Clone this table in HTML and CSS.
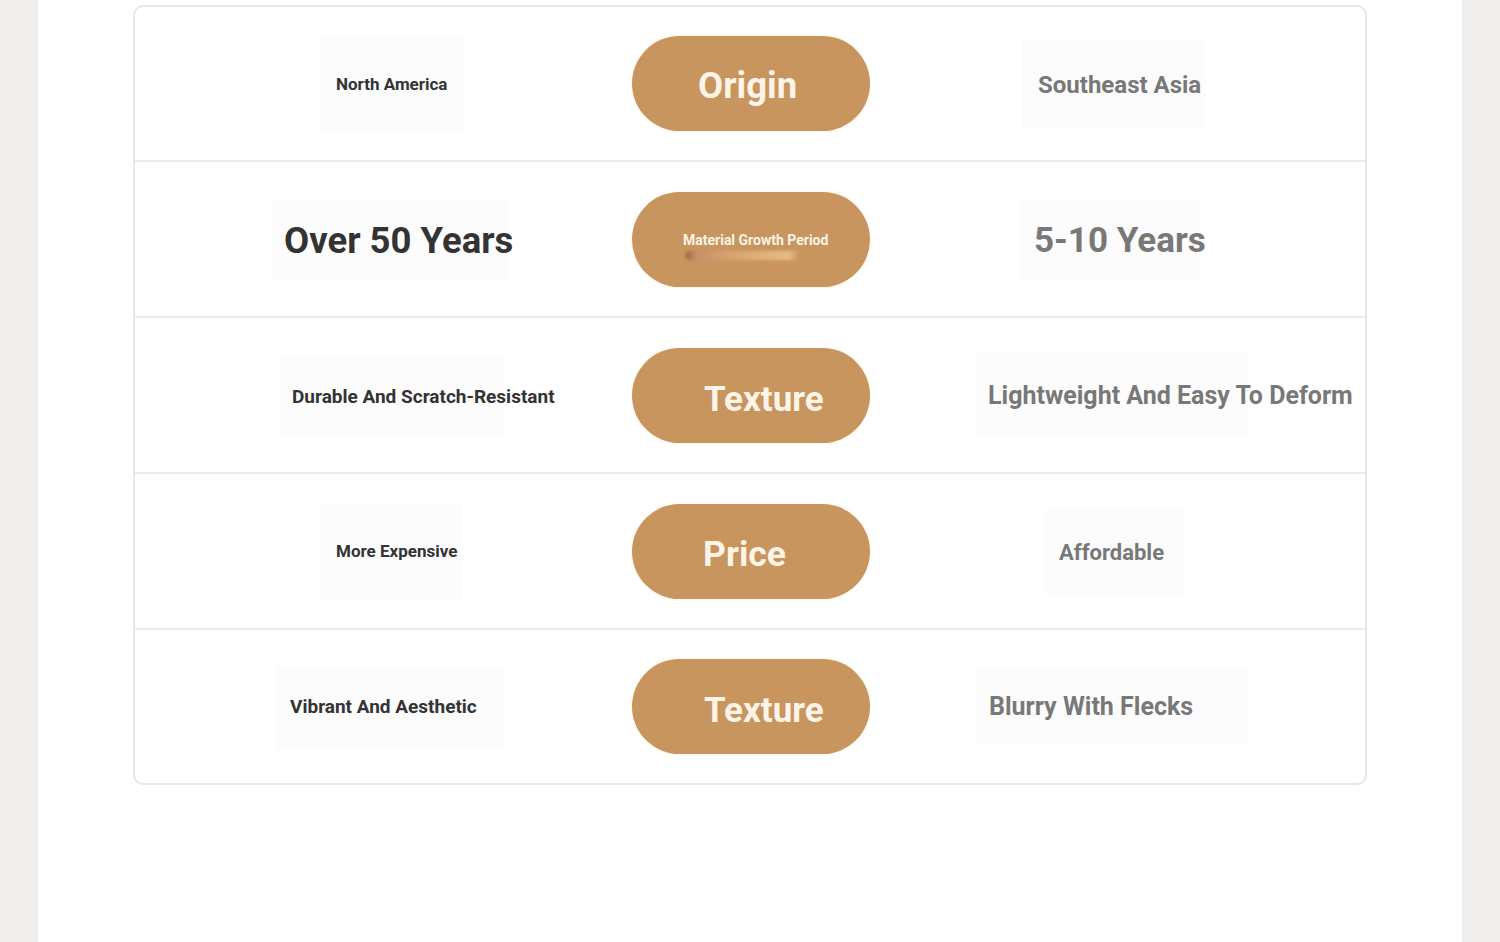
FILE: index.html
```html
<!DOCTYPE html>
<html lang="en">
  <head>
    <meta charset="UTF-8" />
    <meta name="viewport" content="width=device-width, initial-scale=1.0" />
    <title>Material comparison</title>
    <link rel="stylesheet" href="styles.css">
  </head>
  <body>
    <div class="page">
      <div class="compare">
        <div class="row first">
          <div class="cell">
            <div class="tag tag-dark size-17 r1-left">North America</div>
          </div>
          <div class="pill p-origin">Origin</div>
          <div class="cell">
            <div class="tag tag-grey size-24 r1-right">Southeast Asia</div>
          </div>
        </div>

        <div class="row">
          <div class="cell">
            <div class="tag tag-dark size-36 r2-left">Over 50 Years</div>
          </div>
          <div class="pill pill-small p-growth">
            Material Growth Period
            <span class="smudge"></span>
          </div>
          <div class="cell">
            <div class="tag tag-grey size-35 r2-right">5-10 Years</div>
          </div>
        </div>

        <div class="row">
          <div class="cell">
            <div class="tag tag-dark size-19 r3-left">Durable And Scratch-Resistant</div>
          </div>
          <div class="pill p-texture">Texture</div>
          <div class="cell">
            <div class="tag tag-grey size-25 r3-right">Lightweight And Easy To Deform</div>
          </div>
        </div>

        <div class="row">
          <div class="cell">
            <div class="tag tag-dark size-17 r4-left">More Expensive</div>
          </div>
          <div class="pill p-price">Price</div>
          <div class="cell">
            <div class="tag tag-grey size-22 r4-right">Affordable</div>
          </div>
        </div>

        <div class="row last">
          <div class="cell">
            <div class="tag tag-dark size-19 r5-left">Vibrant And Aesthetic</div>
          </div>
          <div class="pill p-texture">Texture</div>
          <div class="cell">
            <div class="tag tag-grey size-25 r5-right">Blurry With Flecks</div>
          </div>
        </div>
      </div>
    </div>
  </body>
</html>
```

FILE: styles.css
```css
* {
  box-sizing: border-box;
}
html,
body {
  margin: 0;
  height: 100%;
}
body {
  background-color: #efeeec;
  font-family: Roboto, "Liberation Sans", sans-serif;
}
.page {
  width: 1424px;
  min-height: 942px;
  margin-left: 38px;
  background-color: #ffffff;
  padding-top: 5px;
}
.compare {
  margin-left: 95px;
  width: 1234px;
  border: 2px solid #e7e7e7;
  border-radius: 10px;
}
.row {
  display: grid;
  grid-template-columns: 497px 238px 1fr;
  align-items: center;
  height: 156px;
  border-bottom: 2px solid #ececec;
}
.row.first {
  height: 155px;
}
.row.last {
  border-bottom: none;
  height: 153px;
}
.cell {
  display: flex;
  align-items: center;
  height: 100%;
}
.tag {
  display: flex;
  align-items: center;
  font-weight: bold;
  white-space: nowrap;
  background-color: #fcfcfc;
  padding-left: 14px;
}
.tag-dark {
  color: #333333;
}
.tag-grey {
  color: #787878;
}
.size-17 {
  font-size: 17px;
}
.size-19 {
  font-size: 19px;
}
.size-22 {
  font-size: 22px;
}
.size-24 {
  font-size: 24px;
}
.size-25 {
  font-size: 25px;
}
.size-35 {
  font-size: 35px;
}
.size-36 {
  font-size: 36.5px;
}

.r1-left {
  margin-left: 185px;
  width: 144px;
  height: 93px;
  padding-left: 16px;
}
.r1-right {
  margin-left: 152px;
  width: 183px;
  height: 86px;
  padding-left: 16px;
  padding-top: 2px;
}
.r2-left {
  margin-left: 137px;
  width: 236px;
  height: 80px;
  padding-left: 12px;
  padding-top: 3px;
}
.r2-right {
  margin-left: 150px;
  width: 180px;
  height: 80px;
  padding-top: 3px;
}
.r3-left {
  margin-left: 145px;
  width: 225px;
  height: 80px;
  padding-left: 12px;
  padding-top: 2px;
}
.r3-right {
  margin-left: 106px;
  width: 272px;
  height: 84px;
  padding-left: 12px;
}
.r4-left {
  margin-left: 185px;
  width: 142px;
  height: 97px;
  padding-left: 16px;
}
.r4-right {
  margin-left: 175px;
  width: 138px;
  height: 85px;
  padding-left: 14px;
  padding-top: 2px;
}
.r5-left {
  margin-left: 141px;
  width: 227px;
  height: 82px;
  padding-left: 14px;
}
.r5-right {
  margin-left: 106px;
  width: 272px;
  height: 77px;
  padding-left: 13px;
}

.pill {
  position: relative;
  display: flex;
  align-items: center;
  height: 95px;
  border-radius: 48px;
  background-color: #c8955f;
  box-shadow: 0 0 3px rgba(255, 240, 220, 0.9);
  color: #fdf4e8;
  font-size: 35px;
  font-weight: bold;
  white-space: nowrap;
  padding-top: 3px;
}
.p-origin {
  padding-left: 66px;
  font-size: 36.5px;
}
.p-texture {
  padding-left: 72px;
  padding-top: 8px;
}
.p-price {
  padding-left: 71px;
  padding-top: 6px;
  font-size: 35.5px;
}
.pill-small {
  font-size: 14px;
  padding-left: 51px;
  padding-top: 2px;
}
.smudge {
  position: absolute;
  left: 53px;
  top: 59px;
  width: 115px;
  height: 9px;
  border-radius: 5px;
  background: linear-gradient(90deg, #8a5a3a 0%, #c98f6a 10%, #e2b07e 50%, #f0c890 90%, rgba(240, 200, 144, 0) 100%);
  filter: blur(1.5px);
  opacity: 0.75;
}
```
